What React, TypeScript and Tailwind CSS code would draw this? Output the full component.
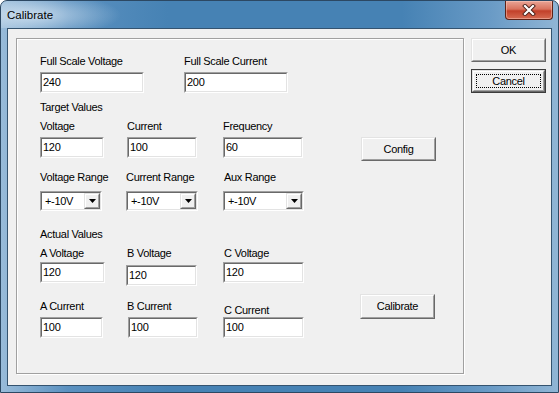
import React from "react";

const sunkenOuter =
  "border border-t-[#a0a0a0] border-l-[#a0a0a0] border-b-white border-r-white";
const sunkenInner =
  "border border-t-[#696969] border-l-[#696969] border-b-[#e3e3e3] border-r-[#e3e3e3]";
const raisedOuter =
  "border border-t-[#e3e3e3] border-l-[#e3e3e3] border-b-[#696969] border-r-[#696969]";
const raisedInner =
  "border border-t-white border-l-white border-b-[#a0a0a0] border-r-[#a0a0a0]";

function Label({ text, className = "" }: { text: string; className?: string }) {
  return <div className={`h-[13px] leading-[13px] whitespace-nowrap ${className}`}>{text}</div>;
}

function Edit({ value, className = "" }: { value: string; className?: string }) {
  return (
    <div className={`${sunkenOuter} ${className}`}>
      <div className={`${sunkenInner} h-[19px] bg-white pl-px leading-[17px]`}>{value}</div>
    </div>
  );
}

function Combo({ value, className = "" }: { value: string; className?: string }) {
  return (
    <div className={`${sunkenOuter} ${className}`}>
      <div className={`${sunkenInner} flex h-[18px] bg-white`}>
        <span className="flex-1 pl-[3px] leading-[16px]">{value}</span>
        <div className={`${raisedOuter} w-[16px] h-[16px]`}>
          <div className={`${raisedInner} h-full bg-[#f0f0f0] flex items-center justify-center`}>
            <svg width="7" height="4" viewBox="0 0 7 4">
              <path d="M0 0h7L3.5 4z" fill="#000" />
            </svg>
          </div>
        </div>
      </div>
    </div>
  );
}

function Button({
  text,
  className = "",
  focused = false,
}: {
  text: string;
  className?: string;
  focused?: boolean;
}) {
  if (focused) {
    return (
      <div className={`border border-[#3c3c3c] ${className}`}>
        <div className={`${raisedOuter} h-full`}>
          <div className={`${raisedInner} h-full bg-[#f0f0f0] p-[2px]`}>
            <div className="h-full border border-dotted border-black flex items-center justify-center">
              {text}
            </div>
          </div>
        </div>
      </div>
    );
  }
  return (
    <div className={`${raisedOuter} ${className}`}>
      <div className={`${raisedInner} h-full bg-[#f0f0f0] flex items-center justify-center`}>
        {text}
      </div>
    </div>
  );
}

export default function App() {
  return (
    <div className="w-[559px] h-[393px] overflow-hidden rounded-t-[7px] border border-[#2c4863] bg-[linear-gradient(90deg,#98bbd9_0%,#5b91c0_12%,#4682b4_30%,#4682b4_72%,#6a9bc6_88%,#90b5d5_100%)] flex flex-col font-['Liberation_Sans',Arial,sans-serif] text-[11px] tracking-[-0.3px] text-black">
      {/* title bar */}
      <div className="h-[27px] flex items-start bg-[radial-gradient(ellipse_90px_22px_at_30px_14px,rgba(225,236,246,0.75),rgba(225,236,246,0))]">
        <span className="pl-[6px] pt-[8px] text-[11.5px] tracking-normal leading-[13px] text-black">
          Calibrate
        </span>
        <div className="ml-auto mr-[5px] w-[48px] h-[19px] rounded-b-[4px] border border-t-0 border-[#5e2217] bg-[linear-gradient(180deg,#e9a596_0%,#d9735e_45%,#c2402a_55%,#d66b52_100%)] shadow-[inset_0_0_0_1px_rgba(255,210,200,0.45)] flex items-center justify-center">
          <svg width="14" height="12" viewBox="0 0 14 12">
            <path d="M3 2l8 8M11 2l-8 8" stroke="#4a2018" strokeWidth="4" strokeLinecap="square" />
            <path d="M3 2l8 8M11 2l-8 8" stroke="#fff" strokeWidth="2.2" strokeLinecap="square" />
          </svg>
        </div>
      </div>

      {/* client area */}
      <div className="mx-[6px] h-[358px] border border-[#34536f] bg-[#f0f0f0] flex items-start pl-[8px] pt-[9px]">
        <div className="w-[448px] h-[336px] border border-[#a0a0a0] shadow-[1px_1px_0_#fff,inset_1px_1px_0_#fff] flex flex-col pl-[23px]">
          {/* full scale */}
          <div className="mt-[16px] flex items-start">
            <div className="w-[144px] flex flex-col">
              <Label text="Full Scale Voltage" />
              <Edit value="240" className="mt-[4px] w-[104px]" />
            </div>
            <div className="flex flex-col">
              <Label text="Full Scale Current" />
              <Edit value="200" className="mt-[4px] w-[104px]" />
            </div>
          </div>

          <Label text="Target Values" className="mt-[8px]" />

          <div className="mt-[6px] flex items-start h-[41px]">
            <div className="w-[87px] flex flex-col">
              <Label text="Voltage" />
              <Edit value="120" className="mt-[4px] w-[64px]" />
            </div>
            <div className="w-[96px] flex flex-col">
              <Label text="Current" />
              <Edit value="100" className="mt-[4px] w-[70px]" />
            </div>
            <div className="w-[138px] flex flex-col">
              <Label text="Frequency" />
              <Edit value="60" className="mt-[4px] w-[80px]" />
            </div>
            <Button text="Config" className="mt-[17px] w-[75px] h-[24px]" />
          </div>

          <div className="mt-[10px] flex items-start">
            <div className="w-[86px] flex flex-col">
              <Label text="Voltage Range" />
              <Combo value="+-10V" className="mt-[7px] w-[62px]" />
            </div>
            <div className="w-[97px] flex flex-col">
              <Label text="Current Range" />
              <Combo value="+-10V" className="mt-[7px] w-[72px]" />
            </div>
            <div className="flex flex-col">
              <Label text="Aux Range" className="pl-px" />
              <Combo value="+-10V" className="mt-[7px] w-[81px]" />
            </div>
          </div>

          <Label text="Actual Values" className="mt-[17px]" />

          <div className="mt-[6px] flex items-start">
            <div className="w-[87px] flex flex-col">
              <Label text="A Voltage" />
              <Edit value="120" className="mt-[2px] w-[65px]" />
              <Label text="A Current" className="mt-[17px]" />
              <Edit value="100" className="mt-[4px] w-[63px]" />
            </div>
            <div className="w-[96px] flex flex-col">
              <Label text="B Voltage" />
              <Edit value="120" className="mt-[5px] w-[71px] -ml-px" />
              <Label text="B Current" className="mt-[14px]" />
              <Edit value="100" className="mt-[4px] w-[70px] ml-px" />
            </div>
            <div className="w-[137px] flex flex-col">
              <Label text="C Voltage" className="pl-px" />
              <Edit value="120" className="mt-[2px] w-[81px]" />
              <Label text="C Current" className="mt-[21px] pl-px" />
              <Edit value="100" className="w-[81px]" />
            </div>
            <Button text="Calibrate" className="mt-[47px] w-[75px] h-[25px]" />
          </div>
        </div>

        <div className="ml-[7px] flex flex-col">
          <Button text="OK" className="w-[75px] h-[24px]" />
          <Button text="Cancel" focused className="mt-[7px] w-[75px] h-[24px]" />
        </div>
      </div>
    </div>
  );
}
